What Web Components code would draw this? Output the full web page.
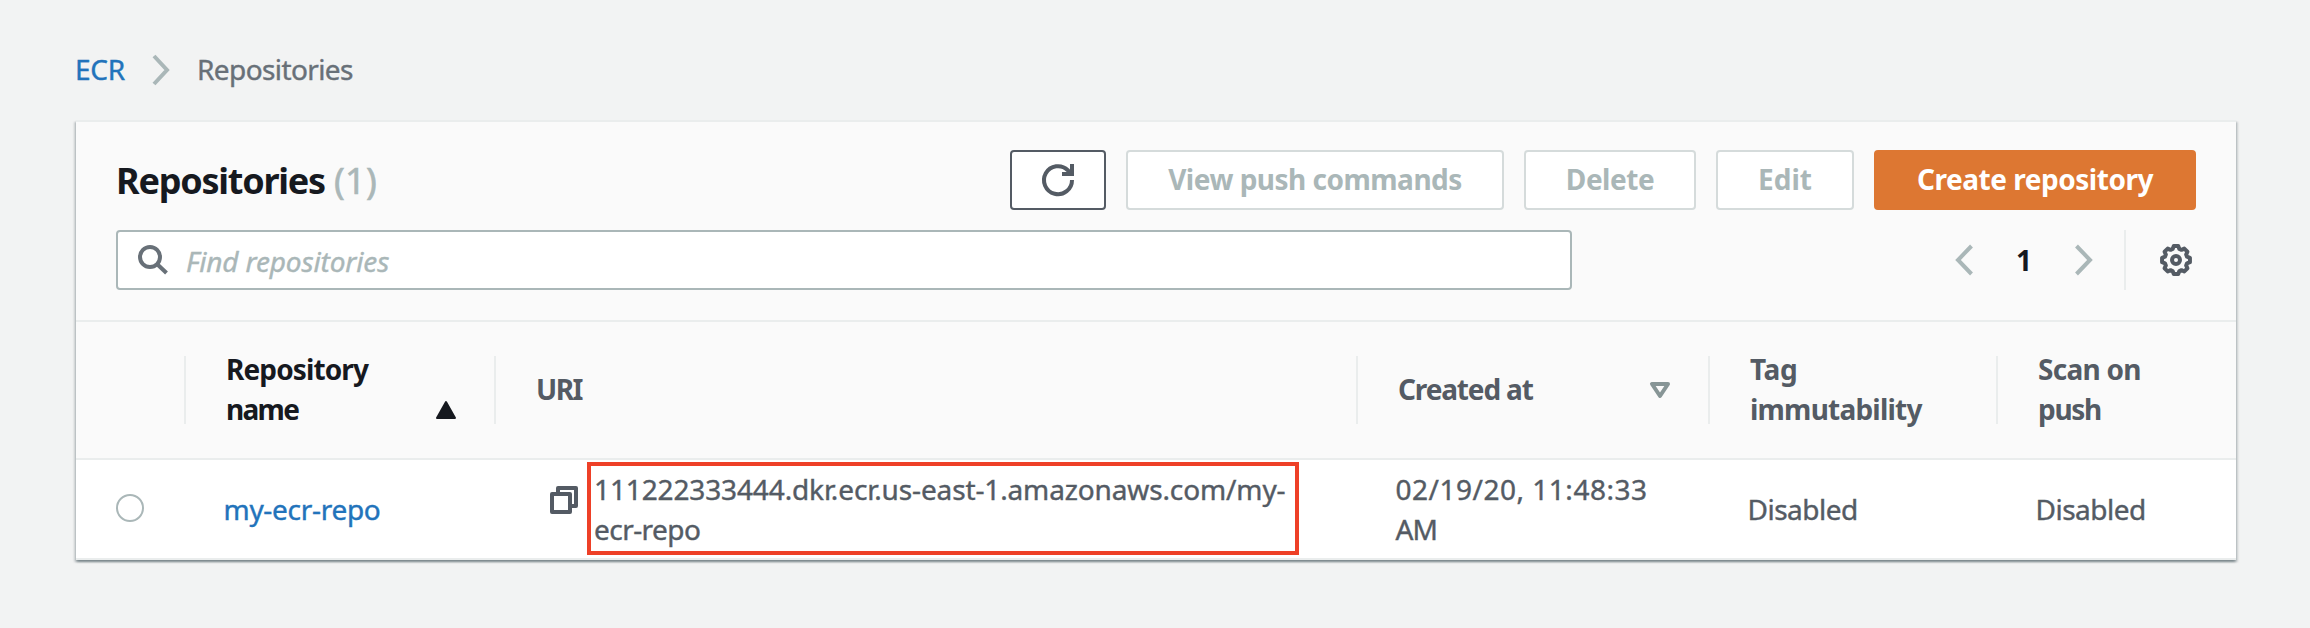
<!DOCTYPE html>
<html lang="en"><head><meta charset="utf-8"><title>ECR Repositories</title>
<style>html,body{margin:0;background:#f2f3f3}</style></head><body>
<ecr-page></ecr-page>
<script>
const define=(name,css,html)=>customElements.define(name,class extends HTMLElement{
  constructor(){super();this.attachShadow({mode:'open'}).innerHTML=`<style>*{box-sizing:border-box}svg{display:block;overflow:visible}${css}</style>${html}`}
});

// Eight-toothed outline around (16,16) for the settings icon
const gear=(()=>{const p=[];for(let i=0;i<8;i++)for(const[r,d]of[[14.1,-9],[14.1,9],[11.5,17],[11.5,28]]){
  const a=(i*45+d)*Math.PI/180;p.push((16+r*Math.cos(a)).toFixed(2)+' '+(16+r*Math.sin(a)).toFixed(2))}
  return 'M'+p.join('L')+'Z'})();

define('ecr-button',`
:host{display:flex;box-sizing:border-box;height:60px;border:2px solid #d5dbdb;border-radius:4px;background:#fff;color:#aab7b8;font-weight:700;line-height:40px;justify-content:center;align-items:center;white-space:nowrap;flex:none;padding-bottom:2px}
:host([primary]){background:#dd7732;border-color:#dd7732;color:#fff}
:host([icon]){border-color:#545b64;color:#545b64;padding:0}`,`<slot></slot>`);

define('ecr-breadcrumbs',`
:host{display:flex;align-items:center;height:40px;color:#687078;-webkit-text-stroke:.4px}
a{color:#2273bb;width:76px;margin-left:-1px;letter-spacing:-.3px}
svg{margin:2px 0 0 1px}
span{margin-left:27px;letter-spacing:-.6px}`,`
<a>ECR</a><svg width="18" height="32" viewBox="0 0 18 32"><path d="M2 2 L15 16 L2 30" fill="none" stroke="#aab7b8" stroke-width="4"/></svg><span>Repositories</span>`);

define('ecr-search',`
:host{display:flex;box-sizing:border-box;width:1456px;height:60px;border:2px solid #aab7b8;border-radius:4px;background:#fff;align-items:center;padding-left:20px;-webkit-text-stroke:.4px}
span{font-style:italic;color:#aab7b8;letter-spacing:-.15px;margin-left:18px;padding-top:2px}`,`
<svg width="30" height="30" viewBox="0 0 30 30" fill="none" stroke="#687078" stroke-width="4"><circle cx="12" cy="12" r="10"/><path d="M19 19 L28.5 28"/></svg><span>Find repositories</span>`);

define('ecr-pagination',`
:host{display:flex;align-items:center;height:60px;font-weight:700;color:#16191f}
span{width:17px;margin:0 42px 0 43px;line-height:40px}
i{width:2px;height:60px;background:#eaeded;margin:0 34px 0 31px}`,`
<svg width="18" height="32" viewBox="0 0 18 32"><path d="M16.500 2 L3 16 L16.500 30" fill="none" stroke="#aab7b8" stroke-width="4"/></svg>
<span>1</span>
<svg width="18" height="32" viewBox="0 0 18 32"><path d="M1.500 2 L15 16 L1.500 30" fill="none" stroke="#aab7b8" stroke-width="4"/></svg><i></i>
<svg width="32" height="32" viewBox="0 0 32 32" fill="none" stroke="#545b64" stroke-width="4"><path stroke-linejoin="round" d="${gear}"/><circle cx="16" cy="16" r="4"/></svg>`);

define('ecr-toolbar',`
:host{display:block;height:200px;border-bottom:2px solid #eaeded;padding:28px 40px 0;box-sizing:border-box;background:#fafafa}
.row{display:flex;justify-content:space-between;height:60px}
.row+.row{margin-top:20px}
h1{margin:0;font-size:36px;line-height:60px;font-weight:700;color:#16191f;letter-spacing:-1.24px;padding-top:1px;white-space:nowrap}
h1 span{font-weight:400;color:#aab7b8;letter-spacing:.3px;margin-left:1px;-webkit-text-stroke:.6px}
.actions{display:flex;gap:20px}
ecr-pagination{margin-right:4px}`,`
<div class="row"><h1>Repositories <span>(1)</span></h1>
<div class="actions"><ecr-button icon style="width:96px"><svg width="32" height="32" viewBox="0 0 16 16" fill="none" stroke="currentColor" stroke-width="2"><path d="M15 8 A7 7 0 1 1 12.900 3.100 L14.500 5"/><path d="M15 0 V5 H10"/></svg></ecr-button>
<ecr-button style="width:378px;letter-spacing:-.5px">View push commands</ecr-button>
<ecr-button style="width:172px;letter-spacing:-.48px">Delete</ecr-button>
<ecr-button style="width:138px">Edit</ecr-button>
<ecr-button primary style="width:322px;letter-spacing:-.46px">Create repository</ecr-button></div></div>
<div class="row"><ecr-search></ecr-search><ecr-pagination></ecr-pagination></div>`);

define('ecr-header-cell',`
:host{display:flex;align-items:center;justify-content:space-between;box-sizing:border-box;height:68px;border-right:2px solid #eaeded;padding:0 38px 2px 40px;font-weight:700;line-height:40px;color:#545b64}
:host(:last-child){border-right:0}
:host([sorted]){color:#16191f}
div{margin:-10px 0}`,`<div><slot></slot></div><slot name="sort"></slot>`);

define('ecr-copy',`:host{display:block;flex:none}`,`
<svg width="28" height="28" viewBox="0 0 28 28" fill="none" stroke="#545b64" stroke-width="4" stroke-linejoin="round"><path d="M8 6 V2 H26 V20 H22"/><rect x="2" y="8" width="18" height="18"/></svg>`);

define('ecr-table',`
:host{display:block;color:#545b64}
.head,.body{display:grid;grid-template-columns:110px 310px 862px 352px 288px 238px}
.head{height:138px;align-items:center;background:#fafafa;border-bottom:2px solid #eaeded}
.body{height:98px;align-items:center;background:#fff;line-height:40px;white-space:nowrap;-webkit-text-stroke:.4px}
.body>*{padding-left:37.500px}
.body .radio{width:28px;height:28px;border:2px solid #aab7b8;border-radius:50%;padding:0;margin-left:40px;margin-top:-2px;background:#fff}
a{color:#2273bb;letter-spacing:-.3px}
.body .uri{display:flex;padding-left:54px}
ecr-copy{margin:24px 9px 0 0}
.mark{width:712px;height:93px;border:4px solid #ee4027;padding:3px 0 0 3px;margin-bottom:1px}`,`
<div class="head">
<ecr-header-cell></ecr-header-cell>
<ecr-header-cell sorted><span style="letter-spacing:-.88px">Repository</span><br><span style="letter-spacing:-1.7px">name</span><svg slot="sort" style="margin-top:41px" width="20" height="18" viewBox="0 0 20 18"><path d="M10 1 L19 17 H1 Z" fill="#16191f" stroke="#16191f" stroke-width="2" stroke-linejoin="round"/></svg></ecr-header-cell>
<ecr-header-cell><span style="letter-spacing:-1.5px">URI</span></ecr-header-cell>
<ecr-header-cell><span style="letter-spacing:-1.15px">Created at</span><svg slot="sort" style="margin-top:2px" width="20" height="16" viewBox="0 0 20 16"><path d="M2 2 H18 L10 14 Z" fill="none" stroke="#879596" stroke-width="4" stroke-linejoin="round"/></svg></ecr-header-cell>
<ecr-header-cell><span style="letter-spacing:-.34px">Tag</span><br><span style="letter-spacing:-.78px">immutability</span></ecr-header-cell>
<ecr-header-cell><span style="letter-spacing:-.72px">Scan on</span><br><span style="letter-spacing:-1.32px">push</span></ecr-header-cell>
</div>
<div class="body">
<div class="radio"></div><a>my-ecr-repo</a>
<div class="uri"><ecr-copy></ecr-copy><div class="mark"><div style="letter-spacing:-.13px">111222333444.dkr.ecr.us-east-1.amazonaws.com/my-</div><div style="letter-spacing:-.55px">ecr-repo</div></div></div>
<div><span style="letter-spacing:.51px">02/19/20, 11:48:33</span><br><span style="letter-spacing:-.8px">AM</span></div>
<div style="letter-spacing:-.5px">Disabled</div><div style="letter-spacing:-.5px">Disabled</div>
</div>`);

define('ecr-page',`
:host{display:block;box-sizing:border-box;height:628px;padding:49px 74px 0 76px;background:#f2f3f3;font:28px/40px "Noto Sans","Open Sans",sans-serif}
.card{margin-top:31px;height:440px;border-top:2px solid #eaeded;border-bottom:2px solid #eaeded;background:#fff;box-sizing:border-box;box-shadow:0 2px 2px 0 rgba(0,28,36,.3),2px 2px 2px 0 rgba(0,28,36,.15),-2px 2px 2px 0 rgba(0,28,36,.15)}`,`
<ecr-breadcrumbs></ecr-breadcrumbs>
<div class="card"><ecr-toolbar></ecr-toolbar><ecr-table></ecr-table></div>`);
</script></body></html>
